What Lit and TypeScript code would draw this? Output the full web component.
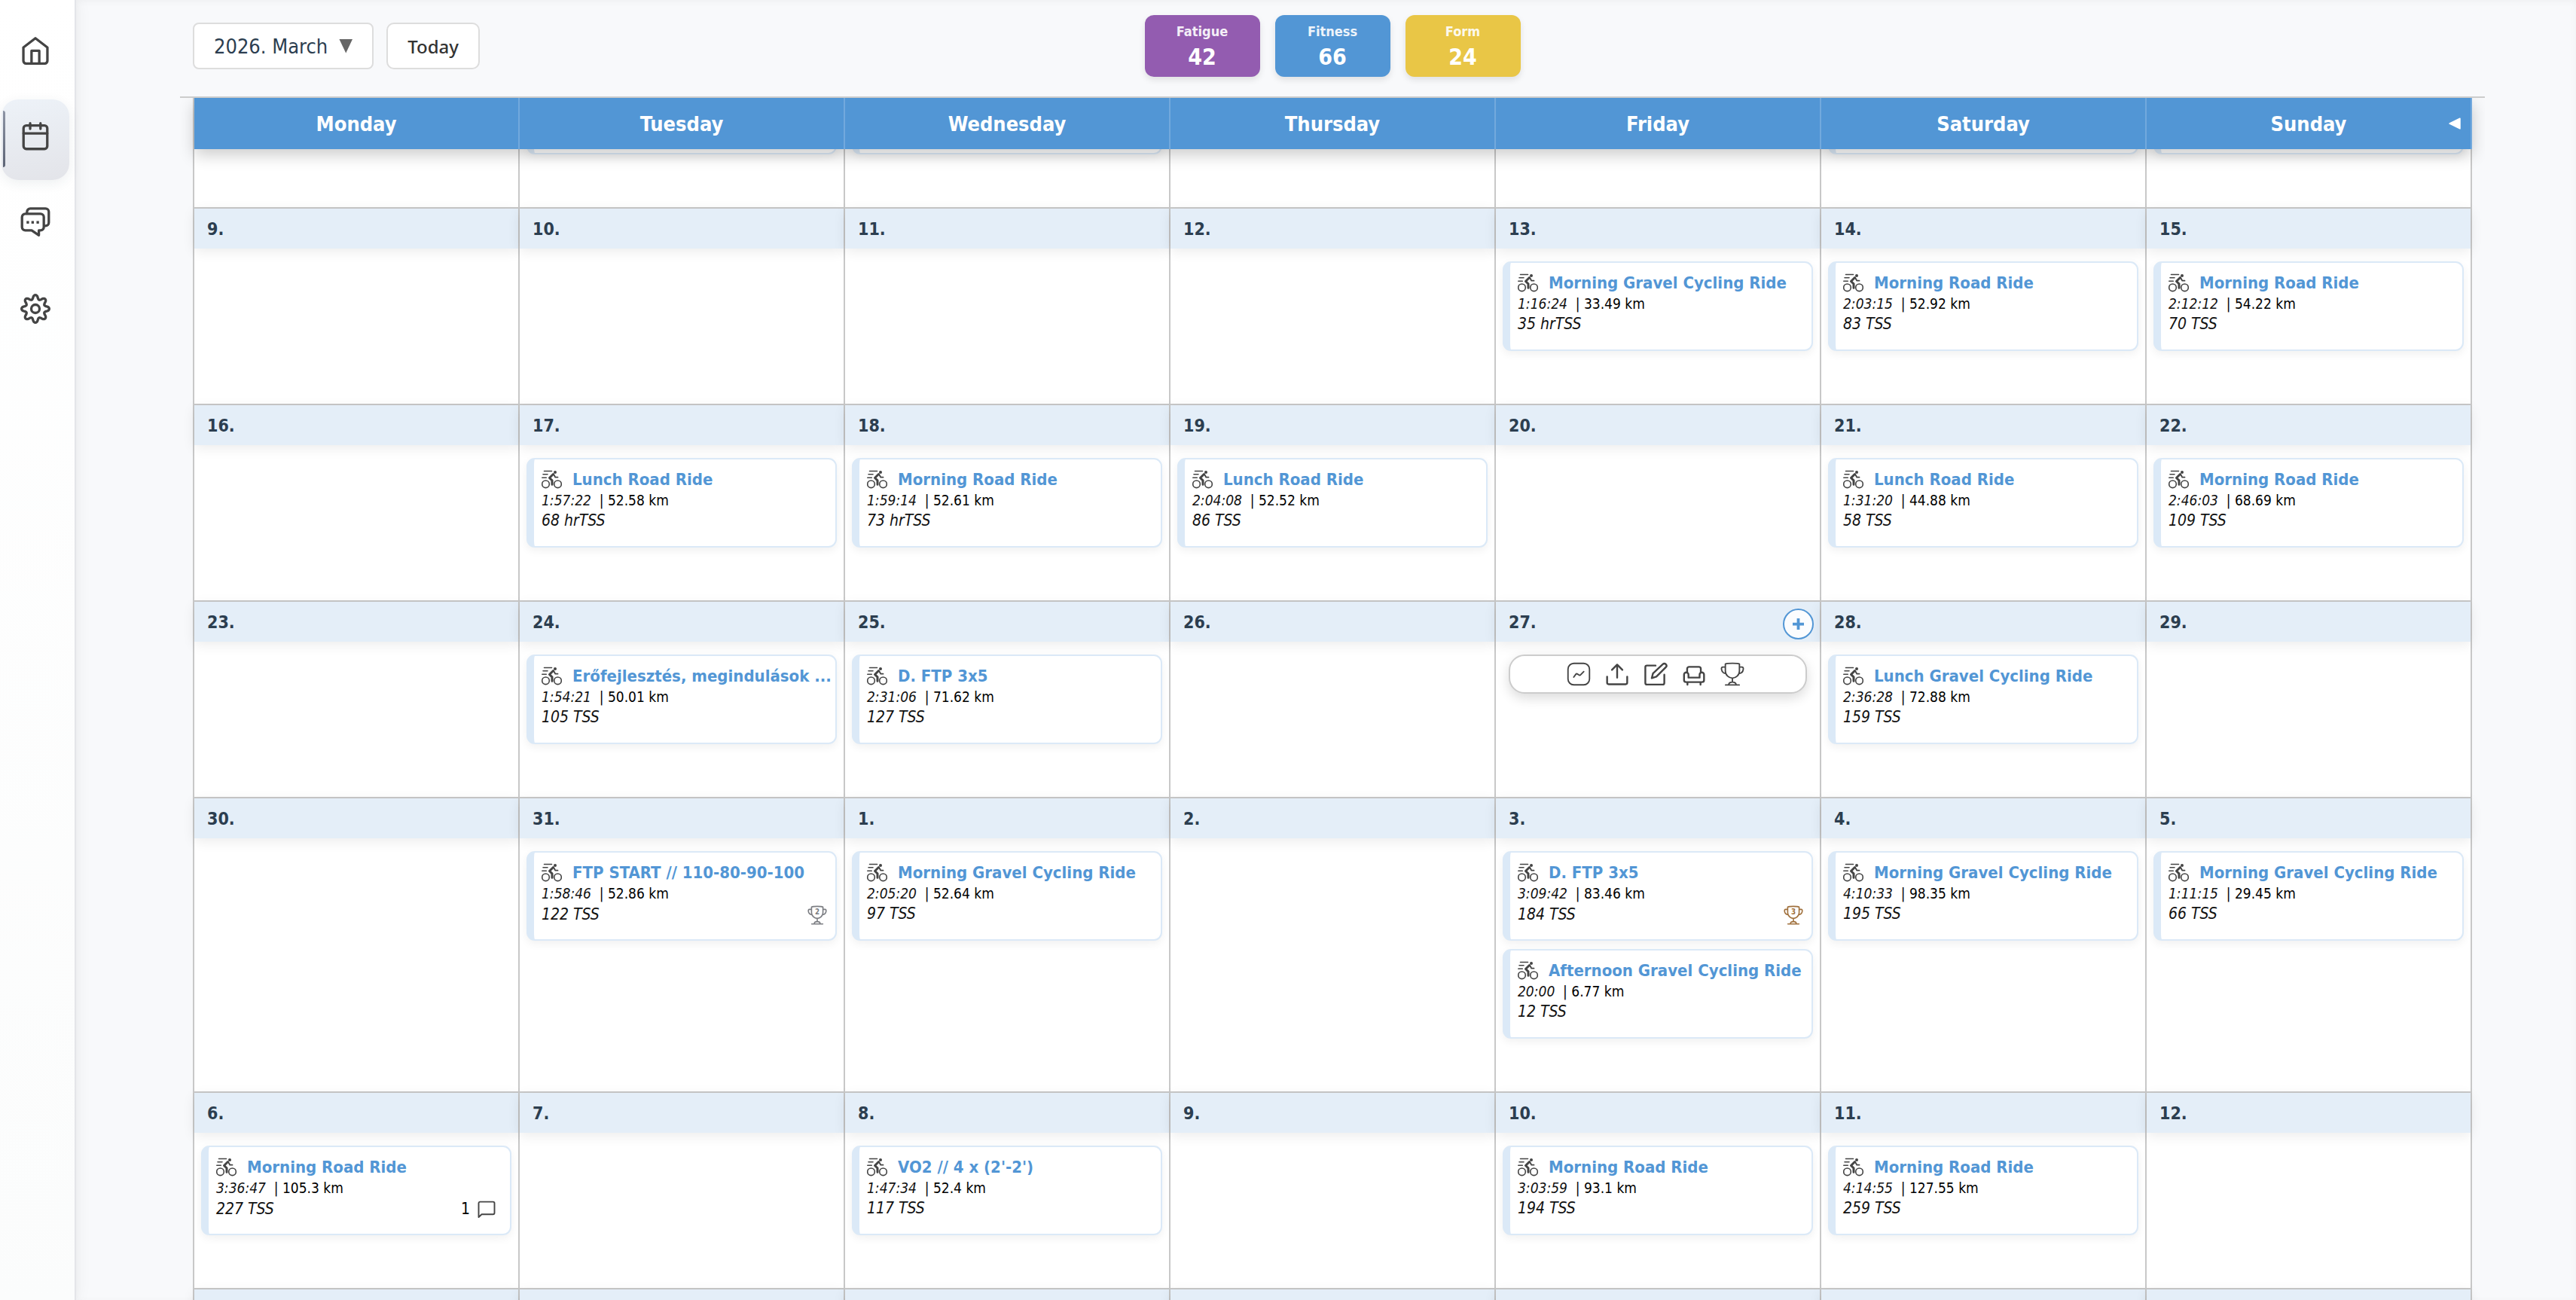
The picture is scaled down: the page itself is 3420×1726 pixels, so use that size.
import { LitElement, html, css, svg, nothing } from "lit";
import { customElement } from "lit/decorators.js";

type Ride = { title: string; time: string; km: string; load: string; cup?: number; notes?: number };
type Day = { date: string; rides: (Ride | null)[]; menu?: boolean };

const r = (title: string, time: string, km: string, load: string, extra: Partial<Ride> = {}): Ride => ({ title, time, km, load, ...extra });
const d = (date: number, ...rides: (Ride | null)[]): Day => ({ date: `${date}.`, rides });
const blank = (...rides: null[]): Day => ({ date: "", rides });

const WEEKDAYS = ["Monday", "Tuesday", "Wednesday", "Thursday", "Friday", "Saturday", "Sunday"];

const WEEKS: Day[][] = [
  [blank(), blank(null), blank(null), blank(), blank(), blank(null), blank(null)],
  [
    d(9), d(10), d(11), d(12),
    d(13, r("Morning Gravel Cycling Ride", "1:16:24", "33.49", "35 hrTSS")),
    d(14, r("Morning Road Ride", "2:03:15", "52.92", "83 TSS")),
    d(15, r("Morning Road Ride", "2:12:12", "54.22", "70 TSS")),
  ],
  [
    d(16),
    d(17, r("Lunch Road Ride", "1:57:22", "52.58", "68 hrTSS")),
    d(18, r("Morning Road Ride", "1:59:14", "52.61", "73 hrTSS")),
    d(19, r("Lunch Road Ride", "2:04:08", "52.52", "86 TSS")),
    d(20),
    d(21, r("Lunch Road Ride", "1:31:20", "44.88", "58 TSS")),
    d(22, r("Morning Road Ride", "2:46:03", "68.69", "109 TSS")),
  ],
  [
    d(23),
    d(24, r("Erőfejlesztés, megindulások ...", "1:54:21", "50.01", "105 TSS")),
    d(25, r("D. FTP 3x5", "2:31:06", "71.62", "127 TSS")),
    d(26),
    { date: "27.", rides: [], menu: true },
    d(28, r("Lunch Gravel Cycling Ride", "2:36:28", "72.88", "159 TSS")),
    d(29),
  ],
  [
    d(30),
    d(31, r("FTP START // 110-80-90-100", "1:58:46", "52.86", "122 TSS", { cup: 2 })),
    d(1, r("Morning Gravel Cycling Ride", "2:05:20", "52.64", "97 TSS")),
    d(2),
    d(3, r("D. FTP 3x5", "3:09:42", "83.46", "184 TSS", { cup: 3 }), r("Afternoon Gravel Cycling Ride", "20:00", "6.77", "12 TSS")),
    d(4, r("Morning Gravel Cycling Ride", "4:10:33", "98.35", "195 TSS")),
    d(5, r("Morning Gravel Cycling Ride", "1:11:15", "29.45", "66 TSS")),
  ],
  [
    d(6, r("Morning Road Ride", "3:36:47", "105.3", "227 TSS", { notes: 1 })),
    d(7),
    d(8, r("VO2 // 4 x (2'-2')", "1:47:34", "52.4", "117 TSS")),
    d(9),
    d(10, r("Morning Road Ride", "3:03:59", "93.1", "194 TSS")),
    d(11, r("Morning Road Ride", "4:14:55", "127.55", "259 TSS")),
    d(12),
  ],
  [blank(), blank(), blank(), blank(), blank(), blank(), blank()],
];

const icon = (body: unknown, cls = "icon", box = "0 0 24 24") => html`<svg class=${cls} viewBox=${box} aria-hidden="true">${body}</svg>`;

// Eight rounded teeth traced as a polar wave around the hub.
const gearOutline = () => {
  const points: string[] = [];
  for (let i = 0; i < 160; i++) {
    const a = (i / 160) * Math.PI * 2;
    const wave = Math.cos(8 * a);
    const radius = 8.5 + 1.5 * Math.sign(wave) * Math.pow(Math.abs(wave), 0.75);
    points.push(`${(12 + radius * Math.sin(a)).toFixed(2)} ${(12 - radius * Math.cos(a)).toFixed(2)}`);
  }
  return `M${points.join("L")}z`;
};

const HOME = svg`<path d="M3.300 9.300 12 2.600l8.700 6.700v9.700a1.900 1.900 0 0 1-1.900 1.900H5.200a1.900 1.900 0 0 1-1.900-1.900z"/><path d="M9.200 20.800v-9.100h5.600v9.100"/>`;
const CALENDAR = svg`<rect x="3.400" y="3.600" width="17.200" height="17" rx="2"/><path d="M3.400 9.300h17.200M8.200 2v4M15.700 2v4"/>`;
const CHAT = svg`<path d="M5.900 5.200V4a2.400 2.400 0 0 1 2.400-2.400h11a2.400 2.400 0 0 1 2.400 2.400v7.700a2.400 2.400 0 0 1-2.400 2.400h-1"/><rect x="5.600" y="10.600" width="1.800" height="1.900" class="dot"/><rect x="9.100" y="10.600" width="1.800" height="1.900" class="dot"/><rect x="12.800" y="10.600" width="1.800" height="1.900" class="dot"/><path d="M4.700 5.400h11a2.400 2.400 0 0 1 2.400 2.400v7.200a2.400 2.400 0 0 1-2.400 2.400h-1.200v3.500l-5.200-3.500H4.700A2.400 2.400 0 0 1 2.300 15V7.800a2.400 2.400 0 0 1 2.400-2.400z"/>`;
const GEAR = svg`<circle cx="12" cy="12" r="3"/><path d=${gearOutline()}/>`;

const BIKE = svg`<g class="line"><circle cx="5.500" cy="18.800" r="4.800"/><circle cx="21.500" cy="18.800" r="4.800"/><path d="M3.500 1.500h10M2 5.800h6M.8 10.200h5.500"/></g><circle cx="18" cy="2.900" r="2" class="solid"/><path d="M15.500 5.500 10.500 10.500l3.500 3.300v5.500" class="body"/><path d="M16.500 6.500l1.800 3.200h3.200" class="arm"/>`;
const CHART = svg`<rect x="1.300" y="1.300" width="21.400" height="21.400" rx="5.800"/><path d="M7 15l2.300-3.100a.8.8 0 0 1 1-.2l2.400 1.400a.8.8 0 0 0 1-.2L17 9.500"/>`;
const UPLOAD = svg`<path class="bold" d="M2 14.500v6a1.600 1.600 0 0 0 1.600 1.600h16.800a1.600 1.600 0 0 0 1.600-1.600v-6M12 15.500V2.600M6.800 7.800 12 2.600l5.200 5.200"/>`;
const EDIT = svg`<path class="bold" d="M12 3.500H3.400A1.600 1.600 0 0 0 1.800 5.100v15.700a1.600 1.600 0 0 0 1.600 1.600h15.700a1.600 1.600 0 0 0 1.600-1.600V12.500"/><path class="bold" d="M19.200 2.200a2.100 2.100 0 0 1 3 3L12.800 14.600 8.200 16l1.200-4.600z"/>`;
const SOFA = svg`<path class="bold" d="M5.200 10.200V6.800a2 2 0 0 1 2-2h9.600a2 2 0 0 1 2 2v3.400"/><path class="bold" d="M6.500 15.500v-3a2.200 2.200 0 1 0-4.400 0V18A2 2 0 0 0 4 20h16a2 2 0 0 0 2-2v-5.500a2.200 2.200 0 1 0-4.400 0v3zM5.500 20.500v2M18.500 20.500v2"/>`;
const CUP = svg`<path d="M5 2c2-1 12-1 14 0v7c0 4-3.500 7-7 7s-7-3-7-7zM5 5H2.500C1.200 5 1 6 1.200 7.400c.3 2 1.700 3.800 4.300 4M19 5h2.500c1.300 0 1.500 1 1.300 2.400-.3 2-1.700 3.800-4.300 4M12 16v3.500M5.200 22.800h13.600M8.300 22.500c.2-1.800 1.300-2.500 3.700-2.500s3.500.7 3.700 2.500"/>`;
const NOTE = svg`<path d="M1.500 22V3.500a1.900 1.900 0 0 1 1.900-1.900h17.200a1.900 1.900 0 0 1 1.900 1.900v12.800a1.900 1.900 0 0 1-1.900 1.900H5.500z"/>`;

@customElement("app-root")
export class AppRoot extends LitElement {
  static styles = css`
    :host {
      display: block;
      font-family: "DejaVu Sans Condensed", "DejaVu Sans", sans-serif;
      color: #2c3e50;
    }
    * { box-sizing: border-box; }
    button { font: inherit; color: inherit; cursor: pointer; margin: 0; }
    .shell { display: flex; height: 100vh; overflow: hidden; background: #f8f9fb; }
    svg { display: block; fill: none; stroke: #444; stroke-width: 2; stroke-linejoin: round; stroke-linecap: round; flex: none; }

    .sidebar {
      width: 101px; flex: none; padding: 18px 7px 0 2px;
      display: flex; flex-direction: column; gap: 7px;
      background: linear-gradient(#ffffff, #fbfcfc);
      border-right: 2px solid #e4e5e9;
      box-shadow: 2px 0 20px rgba(0, 0, 0, 0.05);
    }
    .nav-item {
      position: relative; height: 107px; padding-bottom: 8px; border-radius: 22px;
      display: flex; align-items: center; justify-content: center;
    }
    .nav-item.active {
      background: linear-gradient(170deg, #edf2f8, #e3e4e9);
      box-shadow: 0 4px 16px rgba(44, 62, 80, 0.08);
    }
    .nav-item.active::before {
      content: ""; position: absolute; left: 2px; top: 15px; bottom: 17px; width: 3px;
      border-radius: 0 4px 4px 0; background: linear-gradient(#8e95a5, #5d6475);
    }
    .icon { width: 44px; height: 44px; stroke-width: 1.8; }
    .dot { fill: #444; stroke: none; }

    .main {
      flex: 1; min-width: 0; display: flex; flex-direction: column; padding: 0 121px 0 138px;
      box-shadow: inset 0 2px 8px rgba(0, 0, 0, 0.04);
    }
    .toolbar {
      height: 128px; flex: none; padding: 0 17px;
      display: grid; grid-template-columns: 1fr auto 1fr; align-items: start;
    }
    .picker { display: flex; gap: 17px; padding-top: 30px; }
    .btn {
      height: 62px; padding: 0 26px; border: 2px solid #ddd; border-radius: 8px; background: #fff;
      display: flex; align-items: center; gap: 15px; font-size: 27px;
    }
    .btn.today { color: #333; font-family: "Noto Sans", sans-serif; font-weight: 500; font-size: 24px; border-radius: 10px; }
    .caret { width: 18px; height: 19px; background: #666; clip-path: polygon(0 0, 100% 0, 50% 100%); }
    .stats { display: flex; gap: 20px; padding-top: 20px; }
    .stat {
      width: 153px; height: 82px; border-radius: 12px; color: #fff; font-weight: bold;
      display: flex; flex-direction: column; align-items: center; padding-top: 11px;
      box-shadow: 0 4px 8px rgba(0, 0, 0, 0.1);
    }
    .fatigue { background: #935cb0; }
    .fitness { background: #5296d5; }
    .form { background: #e9c646; }
    .stat-name { font-size: 18px; line-height: 22px; opacity: 0.9; }
    .stat-value { font-size: 30px; line-height: 46px; }

    .scroller { flex: 1; min-height: 0; overflow: auto; scrollbar-width: none; padding: 0 17px; border-top: 2px solid #ccc; }
    .calendar { width: 100%; table-layout: fixed; border-collapse: separate; border-spacing: 0; border-left: 2px solid #c8c8c8; }
    .head { position: sticky; top: 0; z-index: 3; box-shadow: 0 8px 20px rgba(0, 0, 0, 0.2); }
    .weekday {
      height: 68px; padding: 0; background: #5296d5; color: #fff; font-size: 27px; font-weight: bold;
      border-right: 2px solid #72a9dd; position: relative;
    }
    .fold {
      position: absolute; right: 12px; top: 24px; width: 20px; height: 20px; padding: 0; border: 0; background: none;
    }
    .fold svg { width: 20px; height: 20px; fill: #fff; stroke: #fff; }
    .day { padding: 0; vertical-align: top; background: #fff; border-top: 2px solid #c8c8c8; border-right: 2px solid #c8c8c8; }
    .day-head {
      height: 53px; padding: 0 8px 0 17px; background: #e4eef8;
      display: flex; align-items: center; justify-content: space-between;
      font-size: 23px; font-weight: bold; box-shadow: 0 4px 16px rgba(0, 0, 0, 0.08);
    }
    .add {
      width: 41px; height: 41px; margin-top: 5px; padding: 0; border: 2px solid #5296d5; border-radius: 50%; background: #fbfcfe;
      display: flex; align-items: center; justify-content: center;
    }
    .plus { width: 15px; height: 15px; stroke: #5296d5; stroke-width: 6; stroke-linecap: butt; }
    .rides { display: flex; flex-direction: column; gap: 11px; padding: 17px 9px 70px; }
    .ride {
      height: 119px; padding: 12px 2px 0 10px; background: #fff;
      border: 2px solid #dbe9f7; border-left-width: 10px; border-radius: 11px;
      box-shadow: 0 4px 12px rgba(0, 0, 0, 0.06);
    }
    .ride-top { display: flex; align-items: center; gap: 14px; height: 29px; color: #5296d5; }
    .ride-title { margin: 0; font-size: 22px; font-weight: bold; white-space: nowrap; overflow: hidden; text-overflow: ellipsis; }
    .bike { width: 27px; height: 25px; }
    .bike .line { stroke-width: 1.6; }
    .bike .solid { fill: #444; stroke: none; }
    .bike .body { stroke-width: 3; }
    .bike .arm { stroke-width: 1.8; }
    .metric { display: flex; justify-content: space-between; align-items: center; line-height: 27px; font-size: 19px; color: #000; }
    .metric em { color: #111; }
    .load { font-size: 21px; }
    .extra { display: flex; align-items: center; gap: 10px; height: 29px; padding-right: 9px; }
    .extra.notes { padding-right: 17px; font-size: 21px; }
    .note { width: 24px; height: 24px; stroke-width: 1.9; }
    .cup { width: 26px; height: 26px; stroke-width: 1.5; }
    .cup text { font-size: 9px; font-weight: bold; stroke: none; text-anchor: middle; }
    .cup.place-2 { stroke: #7b7d82; }
    .cup.place-2 text { fill: #7b7d82; }
    .cup.place-3 { stroke: #a0703c; }
    .cup.place-3 text { fill: #a0703c; }
    .quick {
      margin: 0 8px; padding-right: 6px; height: 52px; border: 2px solid #ccc; border-radius: 21px; background: #fff;
      display: flex; align-items: center; justify-content: center; gap: 19px;
      box-shadow: 0 6px 16px rgba(0, 0, 0, 0.14);
    }
    .quick button { padding: 0; border: 0; background: none; }
    .tool { width: 32px; height: 32px; stroke-width: 1.4; }
    .tool .bold { stroke-width: 1.8; }
  `;

  firstUpdated() {
    const scroller = this.renderRoot.querySelector(".scroller");
    if (scroller) scroller.scrollTop = 184;
  }

  renderRide(ride: Ride | null) {
    if (!ride) return html`<article class="ride"></article>`;
    return html`<article class="ride">
      <div class="ride-top">${icon(BIKE, "bike", "0 0 27 25")}<h3 class="ride-title">${ride.title}</h3></div>
      <div class="metric"><span><em>${ride.time}</em>&nbsp; | ${ride.km} km</span></div>
      <div class="metric">
        <em class="load">${ride.load}</em>
        ${ride.notes ? html`<span class="extra notes">${ride.notes}${icon(NOTE, "note")}</span>` : nothing}
        ${ride.cup ? html`<span class="extra">${icon(svg`${CUP}<text x="12" y="11.500">${ride.cup}</text>`, `cup place-${ride.cup}`)}</span>` : nothing}
      </div>
    </article>`;
  }

  renderDay(day: Day) {
    const tools: [string, unknown][] = [["Workout", CHART], ["Upload", UPLOAD], ["Edit", EDIT], ["Rest day", SOFA], ["Race", CUP]];
    return html`<td class="day">
      <div class="day-head">
        <span>${day.date}</span>
        ${day.menu ? html`<button class="add" aria-label="Add">${icon(svg`<path d="M12 0v24M0 12h24"/>`, "plus")}</button>` : nothing}
      </div>
      <div class="rides">
        ${day.menu ? html`<div class="quick">${tools.map(([name, body]) => html`<button aria-label=${name}>${icon(body, "tool")}</button>`)}</div>` : nothing}
        ${day.rides.map((ride) => this.renderRide(ride))}
      </div>
    </td>`;
  }

  render() {
    const nav: [string, unknown][] = [["Home", HOME], ["Calendar", CALENDAR], ["Messages", CHAT], ["Settings", GEAR]];
    const stats: [string, number, string][] = [["Fatigue", 42, "fatigue"], ["Fitness", 66, "fitness"], ["Form", 24, "form"]];
    return html`<div class="shell">
      <nav class="sidebar">
        ${nav.map(([name, body]) => html`<a class="nav-item ${name === "Calendar" ? "active" : ""}" href="#${name.toLowerCase()}" aria-label=${name}>${icon(body)}</a>`)}
      </nav>
      <main class="main">
        <header class="toolbar">
          <div class="picker">
            <button class="btn">2026. March<span class="caret"></span></button>
            <button class="btn today">Today</button>
          </div>
          <div class="stats">
            ${stats.map(([name, value, cls]) => html`<div class="stat ${cls}"><span class="stat-name">${name}</span><span class="stat-value">${value}</span></div>`)}
          </div>
        </header>
        <div class="scroller">
          <table class="calendar">
            <thead class="head">
              <tr>
                ${WEEKDAYS.map((name) => html`<th class="weekday" scope="col">${name}${name === "Sunday"
                  ? html`<button class="fold" aria-label="Collapse">${icon(svg`<path d="M5 12 21.500 4v16z"/>`, "tri")}</button>` : nothing}</th>`)}
              </tr>
            </thead>
            <tbody>
              ${WEEKS.map((week) => html`<tr>${week.map((day) => this.renderDay(day))}</tr>`)}
            </tbody>
          </table>
        </div>
      </main>
    </div>`;
  }
}
